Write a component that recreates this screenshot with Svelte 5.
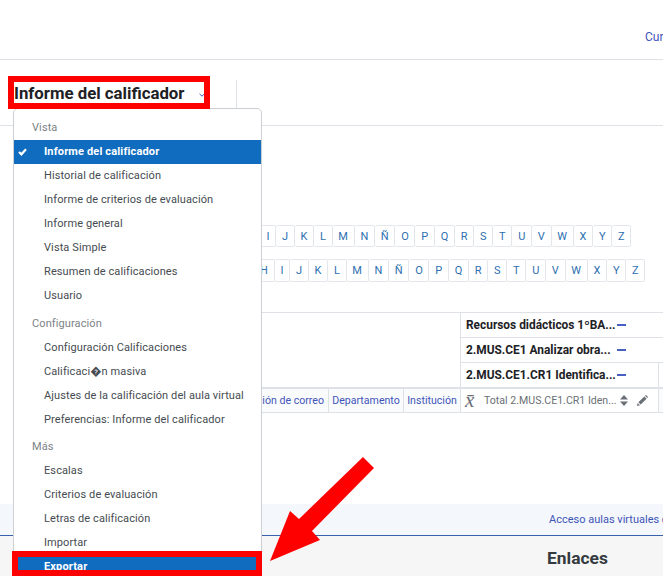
<script>
  const letters = ['A','B','C','D','E','F','G','H','I','J','K','L','M','N','Ñ','O','P','Q','R','S','T','U','V','W','X','Y','Z'];
  const groups = [
    { title: 'Vista', items: ['Informe del calificador','Historial de calificación','Informe de criterios de evaluación','Informe general','Vista Simple','Resumen de calificaciones','Usuario'] },
    { title: 'Configuración', items: ['Configuración Calificaciones','Calificaci\uFFFDn masiva','Ajustes de la calificación del aula virtual','Preferencias: Informe del calificador'] },
    { title: 'Más', items: ['Escalas','Criterios de evaluación','Letras de calificación','Importar','Exportar'] }
  ];
  const activeItems = ['Informe del calificador', 'Exportar'];
  const summary = ['Recursos didácticos 1ºBA...','2.MUS.CE1 Analizar obra...','2.MUS.CE1.CR1 Identifica...'];
</script>

<div class="page">
  <header class="top"><a href="#c" class="course">Cursos</a></header>

  <section class="bar">
    <h1>Informe del calificador</h1>
    <svg class="chev" width="6" height="4" viewBox="0 0 6 4"><path d="M.5.8 3 3.2 5.5.8" fill="none" stroke="#3f5fc0" stroke-width="1"/></svg>
    <span class="vr"></span>
  </section>

  <main>
    <div class="initials one">
      {#each letters as l}<span class="cell">{l}</span>{/each}
    </div>
    <div class="initials two">
      {#each letters as l}<span class="cell">{l}</span>{/each}
    </div>

    <div class="grade">
      {#each summary as s, i}
        <div class="row">
          <div class="blank"></div>
          <div class="cat" class:split={i === 2}>
            <b>{s}</b><i class="minus"></i>
          </div>
        </div>
      {/each}
      <div class="row heads">
        <div class="col email">Dirección de correo</div>
        <div class="col dept">Departamento</div>
        <div class="col inst">Institución</div>
        <div class="col total">
          <span class="xbar">x̄</span>
          <span class="tname">Total 2.MUS.CE1.CR1 Iden...</span>
          <svg class="sort" width="8" height="11" viewBox="0 0 8 11"><path d="M4 0 8 4.4H0ZM4 11 0 6.6H8Z" fill="#6a6f75"/></svg>
          <svg class="pen" width="11" height="11" viewBox="0 0 11 11"><path d="M0 11 .7 8 3 10.3ZM1.4 7.3 7.3 1.4 9.6 3.7 3.7 9.6ZM8 .7 8.6.2Q9 0 9.3.2L10.8 1.7Q11 2 10.8 2.4L10.300 3Z" fill="#6a6f75"/></svg>
        </div>
      </div>
    </div>
  </main>

  <div class="notice"><a href="#a">Acceso aulas virtuales cursos anteriores</a></div>
  <footer><h2>Enlaces</h2></footer>

  <nav class="menu">
    {#each groups as g, gi}
      <div class="mhead" class:tight={gi === 2}>{g.title}</div>
      {#each g.items as it}
        <div class="mitem" class:active={activeItems.includes(it)}>
          {#if it === 'Informe del calificador'}
            <svg class="tick" width="9" height="8" viewBox="0 0 9 8"><path d="M1 4 3.400 6.300 8 1.200" fill="none" stroke="#fff" stroke-width="2.200"/></svg>
          {/if}
          {it}
        </div>
      {/each}
    {/each}
  </nav>

  <div class="mark m1"></div>
  <div class="mark m2"></div>
  <svg class="arrow" width="663" height="576" viewBox="0 0 663 576"><polygon points="363,457 374,468 312,531 320,540 270,561 290,511 299,519" fill="#f00"/></svg>
</div>

<style>
  :global(body) { margin: 0; background: #fff; }
  .page {
    position: relative;
    width: 663px;
    height: 576px;
    overflow: hidden;
    font-family: Roboto, "Liberation Sans", sans-serif;
    color: #343a40;
  }
  a { color: #3f55b8; text-decoration: none; }
  .top {
    height: 59px;
    border-bottom: 1px solid #dee2e6;
    display: flex;
    align-items: flex-start;
    padding-left: 645px;
    white-space: nowrap;
  }
  .course { font-size: 12px; line-height: 14px; margin-top: 30px; }
  .bar {
    height: 65px;
    border-bottom: 1px solid #dee2e6;
    display: flex;
    align-items: flex-start;
    padding-left: 14px;
  }
  h1 {
    margin: 23px 0 0;
    font-size: 16.8px;
    line-height: 20px;
    font-weight: 700;
    color: #1d2125;
    white-space: nowrap;
  }
  .chev { margin: 33px 0 0 15px; }
  .vr { width: 1px; height: 28px; background: #dee2e6; margin: 20px 0 0 31px; }
  main { height: 378px; box-sizing: border-box; padding-top: 99px; }
  .initials { display: flex; white-space: nowrap; font-size: 11px; color: #2e6fb0; }
  .initials.one { margin-left: 104.5px; height: 22px; }
  .initials.two { margin: 12px 0 0 118.5px; height: 23px; }
  .cell {
    box-sizing: border-box;
    border: 1px solid #e3e6ea;
    border-left-width: 0;
    border-radius: 2px;
    display: flex;
    align-items: center;
    justify-content: center;
    min-width: 15px;
    padding: 0 5.75px;
    background: #fff;
  }
  .grade { margin: 30px 0 0 20px; border-top: 1px solid #dee2e6; }
  .row { display: flex; height: 25px; }
  .blank { width: 441px; border-right: 1px solid #dee2e6; box-sizing: border-box; }
  .cat {
    flex: 1;
    display: flex;
    align-items: center;
    padding-left: 5px;
    font-size: 11.9px;
    color: #1d2125;
    border-bottom: 1px solid #dee2e6;
    box-sizing: border-box;
    position: relative;
  }
  .cat b { width: 151px; white-space: nowrap; overflow: hidden; }
  .minus { width: 9px; height: 2.500px; background: #4a5fc4; }
  .cat.split::after { content: ""; position: absolute; left: 197px; top: 0; bottom: 0; width: 1px; background: #dee2e6; }
  .heads {
    height: 26px;
    border-top: 2px solid #dee2e6;
    border-bottom: 1px solid #dee2e6;
    margin-top: -1px;
    font-size: 10.600px;
    color: #3f55b8;
    box-sizing: border-box;
    background: #fafbfd;
  }
  .col { display: flex; align-items: center; white-space: nowrap; border-right: 1px solid #dee2e6; box-sizing: border-box; }
  .email { width: 309px; justify-content: flex-end; padding-right: 4px; }
  .dept { width: 75px; justify-content: center; }
  .inst { width: 57px; justify-content: center; }
  .total { width: 198px; background: #fff; padding-left: 4px; color: #6a6f75; flex: none; }
  .xbar { font: italic 21px/1 "Liberation Serif", serif; color: #6a6f75; width: 19px; }
  .tname { width: 136px; font-size: 10.600px; }
  .sort { margin-right: 9px; }
  .notice {
    height: 31px;
    background: #f4f7fc;
    border-bottom: 1px solid #3a60a8;
    font-size: 11px;
    line-height: 31px;
    white-space: nowrap;
    padding-left: 549px;
    overflow: hidden;
  }
  footer { height: 60px; background: #f6f6f6; padding-left: 547px; }
  h2 { margin: 0; padding-top: 12px; font-size: 17.400px; line-height: 20px; font-weight: 700; color: #343a40; }
  .menu {
    position: absolute;
    left: 13px;
    top: 108px;
    width: 249px;
    box-sizing: border-box;
    padding-top: 7px;
    background: #fff;
    border: 1px solid #ccd0d5;
    border-radius: 5px;
    font-size: 11px;
    letter-spacing: .1px;
  }
  .mhead { height: 24px; line-height: 24px; padding-left: 18px; color: #7c8288; margin-top: 4px; }
  .mhead:first-child { margin-top: 0; }
  .mhead.tight { margin-top: 3px; }
  .mitem { position: relative; height: 24px; line-height: 24px; padding-left: 30px; color: #454b51; white-space: nowrap; }
  .mitem.active { background: #0f6cbf; color: #fff; font-weight: 700; letter-spacing: .15px; }
  .tick { position: absolute; left: 4px; top: 8px; }
  .mark { position: absolute; box-sizing: border-box; border: 6px solid #f00; }
  .m1 { left: 8px; top: 76px; width: 202px; height: 33px; }
  .m2 { left: 12px; top: 551px; width: 250px; height: 25px; }
  .arrow { position: absolute; left: 0; top: 0; pointer-events: none; }
</style>
